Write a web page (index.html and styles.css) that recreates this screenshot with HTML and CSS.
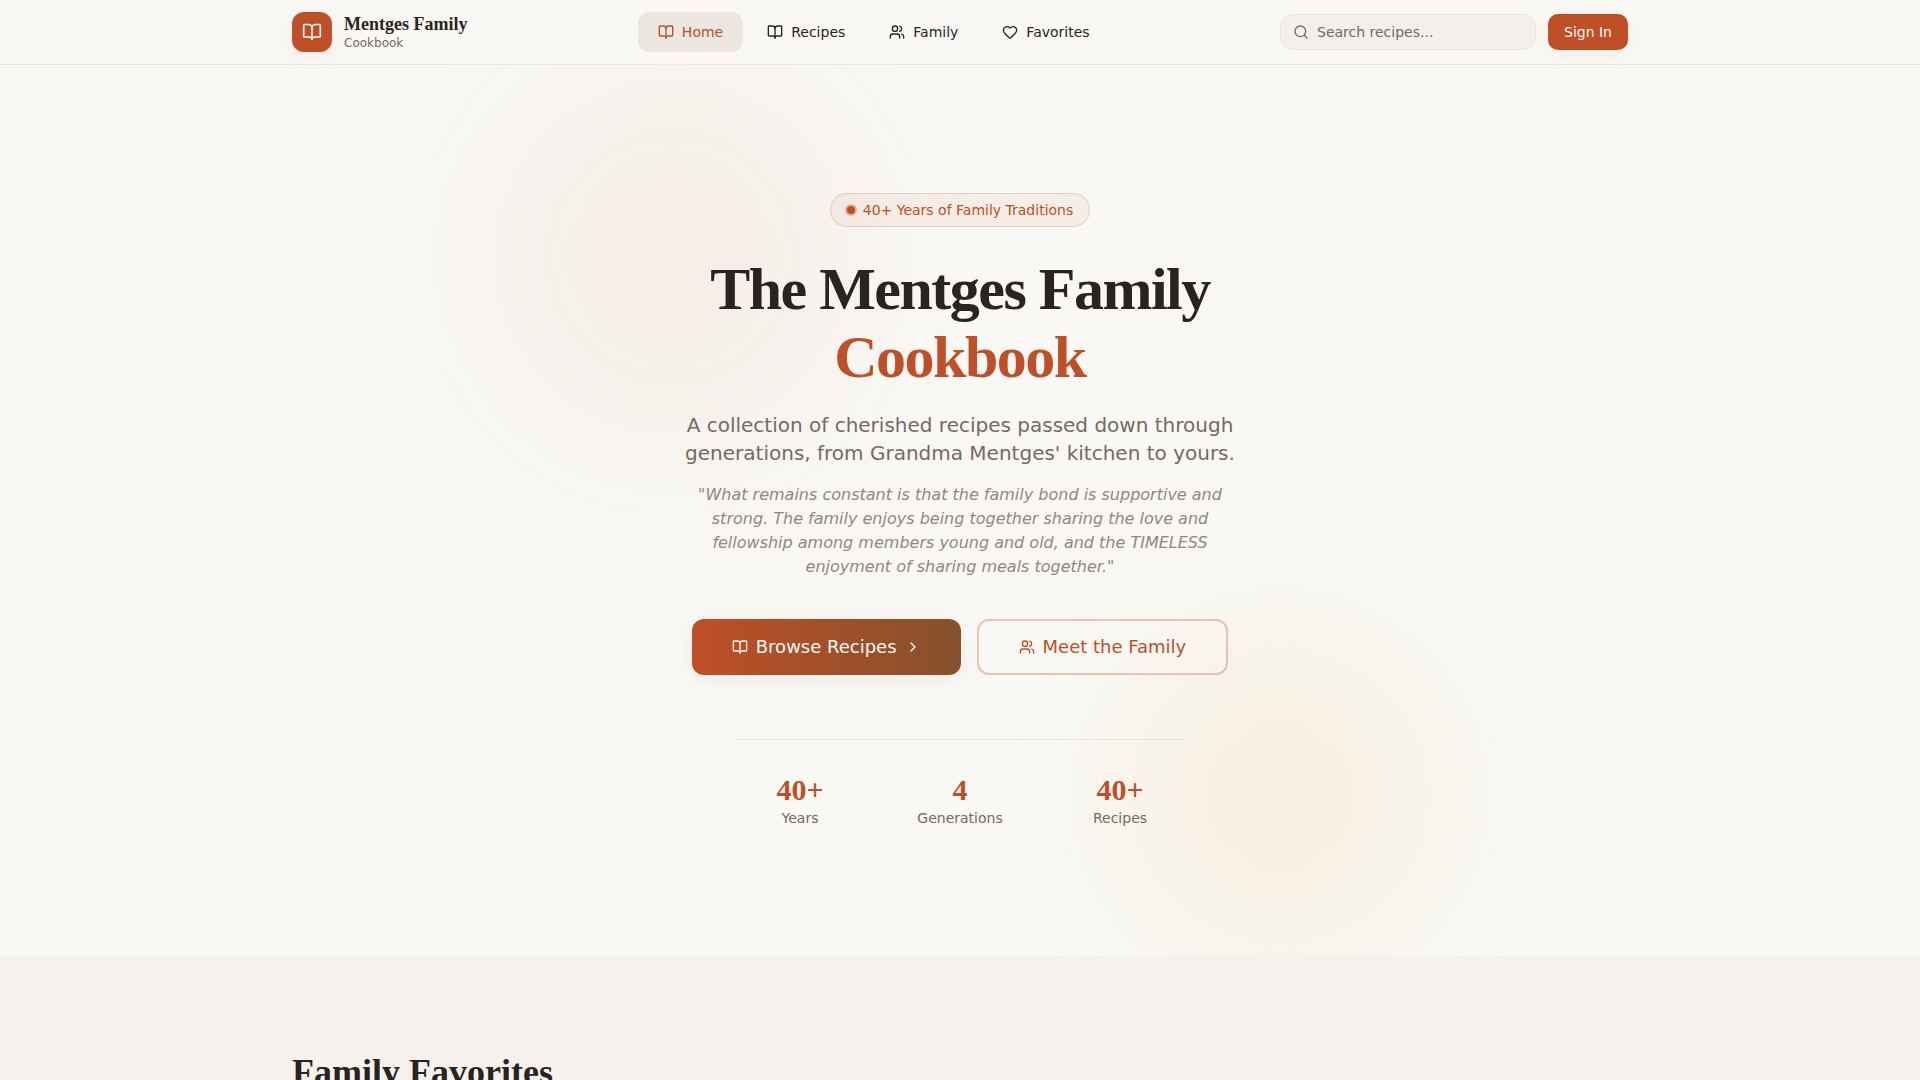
FILE: index.html
```html
<!DOCTYPE html>
<html lang="en">

<head>
    <meta charset="utf-8">
    <meta name="viewport" content="width=device-width, initial-scale=1.0">
    <title>Mentges Family Cookbook</title>
    <link rel="stylesheet" href="styles.css">
</head>

<body>
    <!-- icons used more than once -->
    <svg class="sprite" aria-hidden="true">
        <symbol id="book" viewBox="0 0 24 24">
            <path d="M12 7v14" />
            <path d="M3 18a1 1 0 0 1-1-1V4a1 1 0 0 1 1-1h5a4 4 0 0 1 4 4 4 4 0 0 1 4-4h5a1 1 0 0 1 1 1v13a1 1 0 0 1-1 1h-6a3 3 0 0 0-3 3 3 3 0 0 0-3-3z" />
        </symbol>
        <symbol id="users" viewBox="0 0 24 24">
            <path d="M16 21v-2a4 4 0 0 0-4-4H6a4 4 0 0 0-4 4v2" />
            <circle cx="9" cy="7" r="4" />
            <path d="M22 21v-2a4 4 0 0 0-3-3.87" />
            <path d="M16 3.13a4 4 0 0 1 0 7.75" />
        </symbol>
    </svg>

    <header>
        <div class="container bar">
            <a class="logo" href="#">
                <span class="logo-mark"><svg class="icon icon-large"><use href="#book" /></svg></span>
                <span class="logo-text">
                    <span class="logo-name">Mentges Family</span>
                    <span class="logo-sub">Cookbook</span>
                </span>
            </a>
            <nav>
                <a class="active" href="#"><svg class="icon"><use href="#book" /></svg>Home</a>
                <a href="#"><svg class="icon"><use href="#book" /></svg>Recipes</a>
                <a href="#"><svg class="icon"><use href="#users" /></svg>Family</a>
                <a href="#">
                    <svg class="icon" viewBox="0 0 24 24">
                        <path d="M2 9.5a5.5 5.5 0 0 1 9.591-3.676.56.56 0 0 0 .818 0A5.49 5.49 0 0 1 22 9.5c0 2.29-1.5 4-3 5.5l-5.492 5.313a2 2 0 0 1-3 .019L5 15c-1.5-1.5-3-3.2-3-5.5" />
                    </svg>Favorites</a>
            </nav>
            <div class="actions">
                <label class="search">
                    <svg class="icon" viewBox="0 0 24 24">
                        <circle cx="11" cy="11" r="8" />
                        <path d="m21 21-4.3-4.3" />
                    </svg>
                    <input type="search" placeholder="Search recipes..." aria-label="Search recipes">
                </label>
                <button class="signin" type="button">Sign In</button>
            </div>
        </div>
    </header>

    <main>
        <section class="hero">
            <div class="glow glow-left"></div>
            <div class="glow glow-right"></div>
            <div class="hero-content">
                <p class="badge"><span class="dot"></span>40+ Years of Family Traditions</p>
                <h1>The Mentges Family <span class="accent">Cookbook</span></h1>
                <p class="lead">A collection of cherished recipes passed down through generations, from Grandma Mentges' kitchen to yours.</p>
                <p class="quote">"What remains constant is that the family bond is supportive and strong. The family enjoys being together sharing the love and fellowship among members young and old, and the TIMELESS enjoyment of sharing meals together."</p>
                <div class="buttons">
                    <a class="btn btn-primary" href="#">
                        <svg class="icon"><use href="#book" /></svg>Browse Recipes
                        <svg class="icon" viewBox="0 0 24 24"><path d="m9 18 6-6-6-6" /></svg>
                    </a>
                    <a class="btn btn-outline" href="#"><svg class="icon"><use href="#users" /></svg>Meet the Family</a>
                </div>
                <dl class="stats">
                    <div class="stat">
                        <dt>Years</dt>
                        <dd>40+</dd>
                    </div>
                    <div class="stat">
                        <dt>Generations</dt>
                        <dd>4</dd>
                    </div>
                    <div class="stat">
                        <dt>Recipes</dt>
                        <dd>40+</dd>
                    </div>
                </dl>
            </div>
        </section>

        <section class="favorites">
            <div class="container">
                <h2>Family Favorites</h2>
            </div>
        </section>
    </main>
</body>

</html>
```
FILE: styles.css
```css
:root {
    --background: #f9f8f4;
    --text: #292421;
    --muted: #766a62;
    --primary: #bf4f27;
    --line: #ebe6e0;
    --serif: "Liberation Serif", serif;
}

* {
    box-sizing: border-box;
    margin: 0;
    padding: 0;
}

body {
    background: var(--background);
    color: var(--text);
    font-family: "DejaVu Sans", sans-serif;
    font-size: 14px;
    line-height: 20px;
}

a {
    color: inherit;
    text-decoration: none;
}

h1,
h2,
dd {
    font-family: var(--serif);
    font-weight: bold;
}

.sprite {
    display: none;
}

.icon {
    width: 16px;
    height: 16px;
    flex-shrink: 0;
    fill: none;
    stroke: currentColor;
    stroke-width: 2;
    stroke-linecap: round;
    stroke-linejoin: round;
}

.icon-large {
    width: 20px;
    height: 20px;
}

.container {
    max-width: 1400px;
    margin: 0 auto;
    padding: 0 32px;
}

/* header */

header {
    border-bottom: 1px solid var(--line);
}

.bar {
    display: flex;
    align-items: center;
    justify-content: space-between;
    height: 64px;
}

.logo {
    display: flex;
    align-items: center;
    gap: 12px;
}

.logo-mark {
    display: flex;
    align-items: center;
    justify-content: center;
    width: 40px;
    height: 40px;
    border-radius: 12px;
    background: var(--primary);
    color: var(--background);
    box-shadow: 0 4px 20px rgba(41, 36, 33, 0.05);
}

.logo-text {
    display: flex;
    flex-direction: column;
    gap: 1px;
}

.logo-name {
    font-family: var(--serif);
    font-size: 18px;
    font-weight: bold;
}

.logo-sub {
    color: var(--muted);
    font-size: 12px;
    line-height: 16px;
}

nav {
    display: flex;
    gap: 4px;
}

nav a {
    display: flex;
    align-items: center;
    gap: 8px;
    height: 40px;
    padding: 0 20px;
    border-radius: 12px;
}

nav .active {
    background: #ebe6e0;
    color: var(--primary);
}

.actions {
    display: flex;
    gap: 12px;
}

.search {
    display: flex;
    align-items: center;
    gap: 8px;
    width: 256px;
    height: 36px;
    padding: 0 12px;
    border: 1px solid #ebe3dc;
    border-radius: 12px;
    background: #f3efea;
    color: var(--muted);
}

.search input {
    flex: 1;
    min-width: 0;
    border: none;
    outline: none;
    background: none;
    color: var(--text);
    font: inherit;
}

.search input::placeholder {
    color: var(--muted);
}

.signin {
    height: 36px;
    padding: 0 16px;
    border: none;
    border-radius: 10px;
    background: var(--primary);
    color: var(--background);
    font: inherit;
    box-shadow: 0 4px 20px rgba(41, 36, 33, 0.05);
    cursor: pointer;
}

/* hero */

.hero {
    position: relative;
    overflow: hidden;
    padding: 128px 32px;
}

.glow {
    position: absolute;
    border-radius: 50%;
    filter: blur(64px);
}

.glow-left {
    top: 0;
    left: 25%;
    width: 384px;
    height: 384px;
    background: rgba(191, 79, 39, 0.05);
}

.glow-right {
    right: 25%;
    bottom: 0;
    width: 320px;
    height: 320px;
    background: rgba(230, 150, 40, 0.08);
}

.hero-content {
    position: relative;
    display: flex;
    flex-direction: column;
    align-items: center;
    text-align: center;
}

.badge {
    display: flex;
    align-items: center;
    gap: 8px;
    padding: 6px 16px;
    border: 1px solid rgba(191, 79, 39, 0.2);
    border-radius: 17px;
    background: rgba(191, 79, 39, 0.06);
    color: var(--primary);
}

.dot {
    width: 8px;
    height: 8px;
    border-radius: 50%;
    background: var(--primary);
    box-shadow: 0 0 0 2px rgba(191, 79, 39, 0.35);
}

h1 {
    margin-top: 28px;
    font-size: 60px;
    line-height: 68px;
    letter-spacing: -0.025em;
}

.accent {
    display: block;
    color: var(--primary);
}

.lead {
    max-width: 576px;
    margin-top: 20px;
    color: var(--muted);
    font-size: 20px;
    line-height: 28px;
}

.quote {
    max-width: 576px;
    margin-top: 16px;
    color: #91877f;
    font-size: 16px;
    font-style: italic;
    line-height: 24px;
}

.buttons {
    display: flex;
    gap: 16px;
    margin-top: 40px;
}

.btn {
    display: flex;
    align-items: center;
    gap: 8px;
    height: 56px;
    padding: 0 40px;
    border-radius: 12px;
    font-size: 18px;
    line-height: 28px;
}

.btn-primary {
    background: linear-gradient(to right, var(--primary), #85512c);
    color: var(--background);
    box-shadow: 0 4px 20px rgba(41, 36, 33, 0.06);
}

.btn-outline {
    border: 2px solid rgba(191, 79, 39, 0.3);
    color: var(--primary);
}

.stats {
    display: grid;
    grid-template-columns: repeat(3, 1fr);
    gap: 32px;
    width: 100%;
    max-width: 448px;
    margin-top: 64px;
    padding-top: 32px;
    border-top: 1px solid rgba(120, 105, 95, 0.13);
}

.stat {
    display: flex;
    flex-direction: column-reverse;
}

dt {
    color: var(--muted);
}

dd {
    color: var(--primary);
    font-size: 30px;
    line-height: 36px;
}

/* favorites */

.favorites {
    padding: 96px 0;
    background: #f5f2ed;
}

h2 {
    font-size: 36px;
    line-height: 40px;
}
```
